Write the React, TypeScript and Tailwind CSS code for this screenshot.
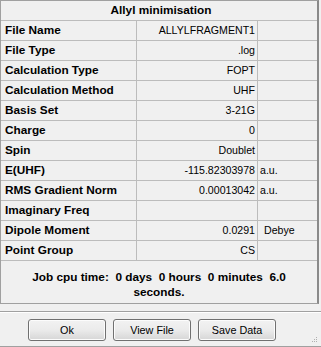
import React from "react";

const rows: { label: string; value: string; unit?: string; unitPad?: string }[] = [
  { label: "File Name", value: "ALLYLFRAGMENT1" },
  { label: "File Type", value: ".log" },
  { label: "Calculation Type", value: "FOPT" },
  { label: "Calculation Method", value: "UHF" },
  { label: "Basis Set", value: "3-21G" },
  { label: "Charge", value: "0" },
  { label: "Spin", value: "Doublet" },
  { label: "E(UHF)", value: "-115.82303978", unit: "a.u.", unitPad: "pl-[2px]" },
  { label: "RMS Gradient Norm", value: "0.00013042", unit: "a.u.", unitPad: "pl-[2px]" },
  { label: "Imaginary Freq", value: "" },
  { label: "Dipole Moment", value: "0.0291", unit: "Debye", unitPad: "pl-[6px]" },
  { label: "Point Group", value: "CS" },
];

const font = { fontFamily: '"Liberation Sans", Arial, sans-serif' };

function Btn({ children }: { children: React.ReactNode }) {
  return (
    <div className="w-[78px] h-[22px] rounded-[3px] border border-[#707070] bg-gradient-to-b from-[#f2f2f2] via-[#ebebeb] to-[#d6d6d6] flex items-center justify-center text-[10.8px] text-black shadow-[inset_0_0_0_1px_#fcfcfc]">
      {children}
    </div>
  );
}

export default function App() {
  return (
    <div className="w-[321px] h-[347px] bg-[#f0f0f0] flex flex-col relative overflow-hidden" style={font}>
      <div className="w-[319px] border-l border-t border-[#a0a0a0] border-r-2 border-r-[#8a8a8a] border-b border-b-[#a0a0a0]">
        <div className="h-[20px] border-b border-[#bcbcbc] flex items-center justify-center font-bold text-[11.8px] text-black pl-[4px] pt-[1px]">
          Allyl minimisation
        </div>
        {rows.map((r) => (
          <div key={r.label} className="flex h-[20px] border-b border-[#bcbcbc] pt-[1px]">
            <div className="w-[136px] border-r border-[#bcbcbc] -mt-[1px] pt-[1px] flex items-center pl-[4px] font-bold text-[11.8px] text-black whitespace-nowrap">
              {r.label}
            </div>
            <div className="w-[121px] border-r border-[#bcbcbc] -mt-[1px] pt-[1px] flex items-center justify-end pr-[2px] text-[10.6px] text-black whitespace-nowrap">
              {r.value}
            </div>
            <div className={`flex-1 flex items-center text-[10.6px] text-black whitespace-nowrap ${r.unitPad ?? ""}`}>
              {r.unit ?? ""}
            </div>
          </div>
        ))}
        <div className="h-[42px] flex flex-col items-center pt-[9px] font-bold text-[11.8px] text-black leading-[15px] whitespace-pre">
          <div>{"Job cpu time:  0 days  0 hours  0 minutes  6.0"}</div>
          <div>seconds.</div>
        </div>
      </div>
      <div className="mt-[7px] h-[2px] w-full border-t border-[#a0a0a0] border-b border-b-white" />
      <div className="mt-[6px] flex gap-[7px] pl-[28px]">
        <Btn>Ok</Btn>
        <Btn>View File</Btn>
        <Btn>Save Data</Btn>
      </div>
      <div className="absolute right-[3px] bottom-[4px] w-[6px] h-[6px]">
        <svg width="6" height="6" viewBox="0 0 6 6">
          <rect x="4" y="0" width="1" height="1" fill="#b0b0b0" />
          <rect x="2" y="2" width="1" height="1" fill="#b0b0b0" />
          <rect x="4" y="2" width="1" height="1" fill="#b0b0b0" />
          <rect x="0" y="4" width="1" height="1" fill="#b0b0b0" />
          <rect x="2" y="4" width="1" height="1" fill="#b0b0b0" />
          <rect x="4" y="4" width="1" height="1" fill="#b0b0b0" />
        </svg>
      </div>
      <div className="absolute left-0 right-0 bottom-0 h-[1px] bg-[#a0a0a0]" />
    </div>
  );
}
